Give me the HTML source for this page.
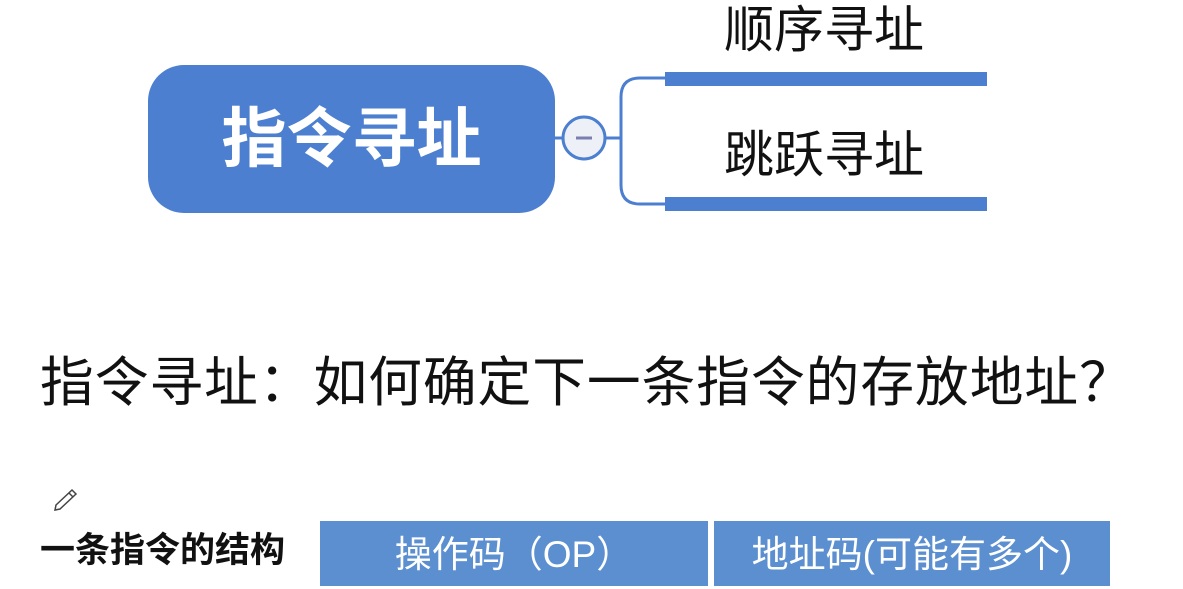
<!DOCTYPE html>
<html><head><meta charset="utf-8"><style>
body{margin:0;width:1183px;height:589px;background:#fff;position:relative;overflow:hidden;font-family:"Liberation Sans","Noto Sans CJK SC",sans-serif}
.a{position:absolute;white-space:nowrap}
</style></head><body>
<div class="a" style="left:148px;top:65px;width:407px;height:148px;border-radius:36px;background:#4c7fd0;color:#fff;font-size:65px;font-weight:bold;line-height:148px;text-align:center">指令寻址</div>
<svg class="a" style="left:0;top:0" width="1183" height="589">
<line x1="555" y1="138" x2="563" y2="138" stroke="#4c7fd0" stroke-width="3"/>
<line x1="605" y1="138" x2="621" y2="138" stroke="#4c7fd0" stroke-width="3"/>
<path d="M665 78 H640 Q621 78 621 97 V185 Q621 204 640 204 H665" fill="none" stroke="#4c7fd0" stroke-width="3"/>
<circle cx="584" cy="138" r="21" fill="#eef0f8" stroke="#4c7fd0" stroke-width="3"/>
<line x1="576" y1="138" x2="592" y2="138" stroke="#7a7fb0" stroke-width="3"/>
<rect x="665" y="72" width="322" height="14" fill="#4c7fd0"/>
<rect x="665" y="197" width="322" height="14" fill="#4c7fd0"/>
<path d="M56 505 L72 490 L76 494 L60 509 L55 510 Z M69 493 L73 497" fill="none" stroke="#444" stroke-width="1.5"/>
</svg>
<div class="a" style="left:724px;top:1px;font-size:50px;line-height:58px;color:#111">顺序寻址</div>
<div class="a" style="left:724px;top:126px;font-size:50px;line-height:58px;color:#111">跳跃寻址</div>
<div class="a" style="left:40px;top:350px;font-size:53.7px;line-height:66px;color:#111;letter-spacing:1px">指令寻址：如何确定下一条指令的存放地址？</div>
<div class="a" style="left:40px;top:530px;font-size:35px;line-height:42px;color:#111;font-weight:bold">一条指令的结构</div>
<div class="a" style="left:320px;top:521px;width:388px;height:65px;background:#5b8fd0;color:#fff;font-size:37px;line-height:68px;text-align:center">操作码（OP）</div>
<div class="a" style="left:714px;top:521px;width:396px;height:65px;background:#5b8fd0;color:#fff;font-size:37px;line-height:68px;text-align:center">地址码(可能有多个)</div>
</body></html>
